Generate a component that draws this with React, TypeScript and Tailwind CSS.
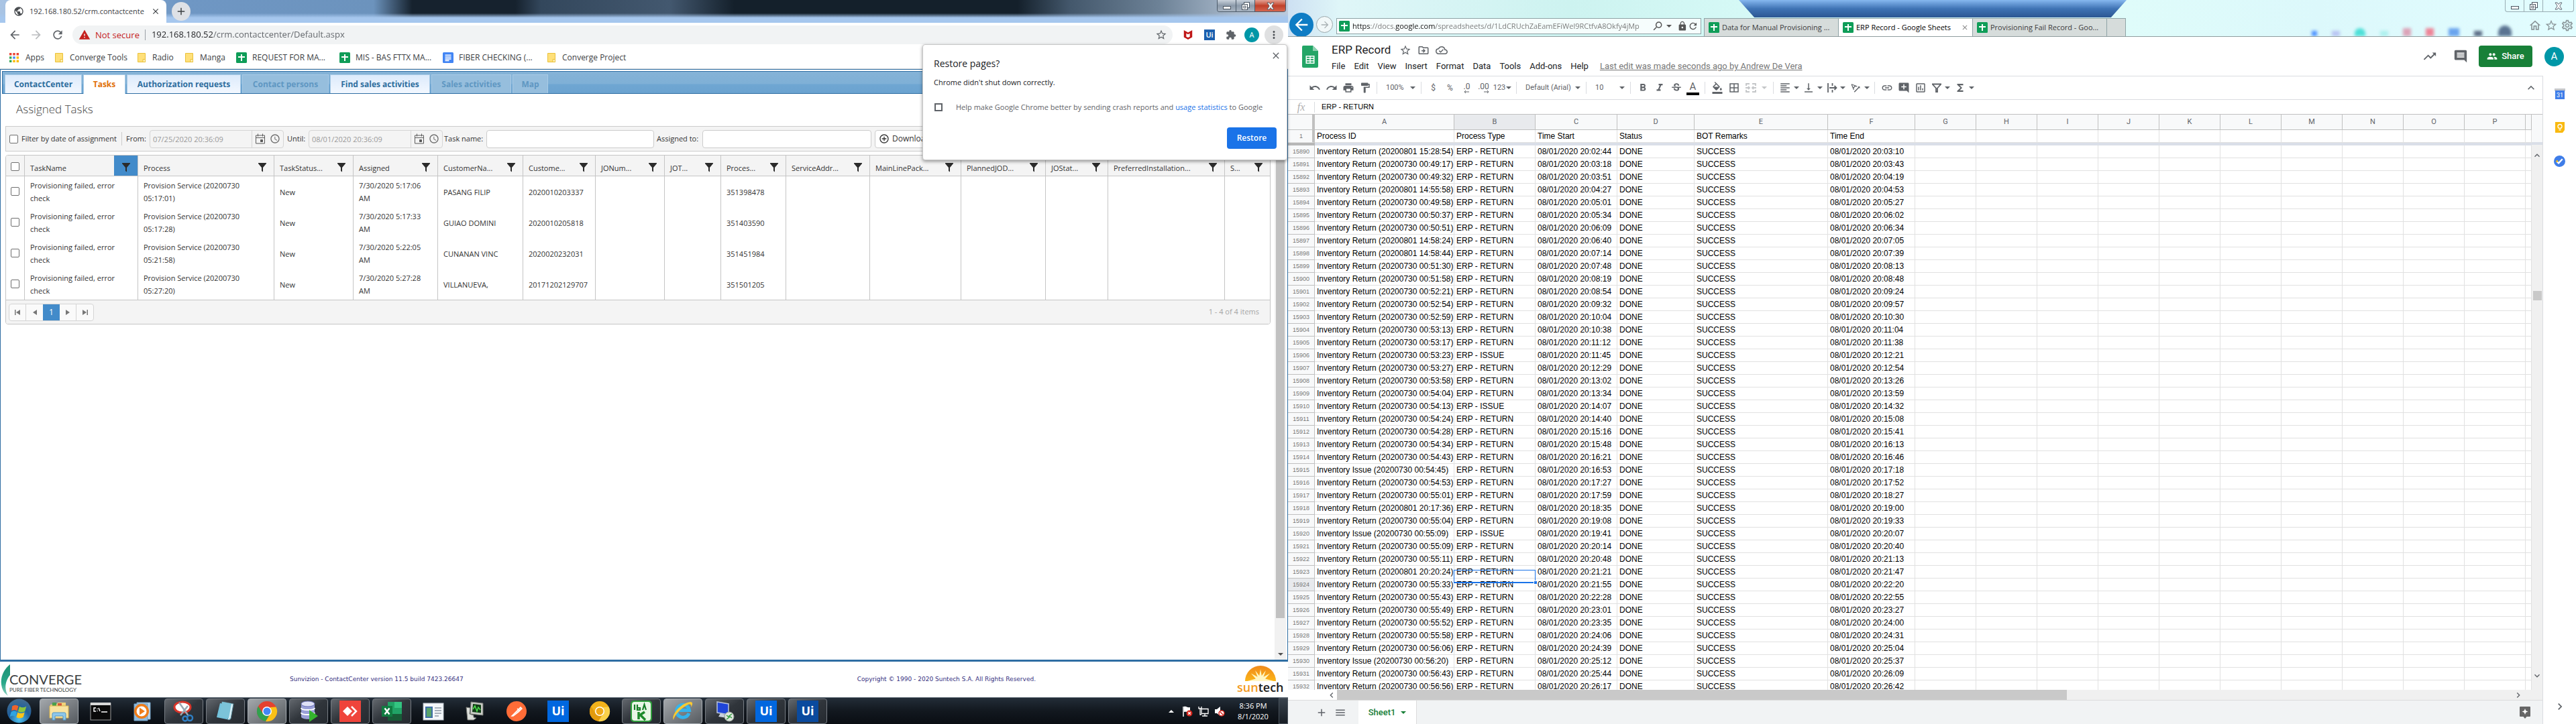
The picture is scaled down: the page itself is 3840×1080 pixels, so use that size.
import React from "react";
import {
  MdUndo, MdRedo, MdPrint, MdFormatPaint, MdStrikethroughS, MdFormatBold, MdFormatItalic,
  MdFormatColorFill, MdBorderAll, MdFormatAlignLeft, MdVerticalAlignBottom, MdTextRotationAngleup,
  MdInsertLink, MdAddComment, MdFunctions, MdTrendingUp, MdComment, MdStarBorder,
  MdArrowBack, MdArrowForward, MdRefresh, MdExtension, MdMoreVert, MdClose, MdAdd, MdPublic,
  MdLock, MdSearch, MdOutlineCloudDone, MdOutlineDriveFileMove, MdMenu, MdChevronRight,
  MdKeyboardArrowUp, MdKeyboardArrowDown, MdWarning, MdGroup, MdOutlineInsertChart, MdOutlineHome,
  MdOutlineSettings, MdOutlineWatchLater, MdAddCircleOutline,
} from "react-icons/md";

const UI = "font-['Open_Sans','Liberation_Sans',sans-serif]";
const ARIAL = "font-['Liberation_Sans',sans-serif]";
const ROBOTO = "font-['Roboto','Liberation_Sans',sans-serif]";

/* ---------- shared icons ---------- */

const SheetsFavicon = () => (
  <svg viewBox="0 0 16 16" className="h-4 w-4 shrink-0" aria-hidden="true">
    <rect width="16" height="16" rx="1.5" fill="#0f9d58" />
    <path d="M7 3h2v3h4v2H9v5H7V8H3V6h4z" fill="#fff" />
  </svg>
);

const DocsFavicon = () => (
  <svg viewBox="0 0 16 16" className="h-4 w-4 shrink-0" aria-hidden="true">
    <rect width="16" height="16" rx="1.5" fill="#4285f4" />
    <path d="M3.5 3.5h9v1.6h-9zM3.5 6.3h9v1.6h-9zM3.5 9.1h9v1.6h-9zM3.5 11.6h6v1.6h-6z" fill="#fff" />
  </svg>
);

const FolderIcon = () => (
  <svg viewBox="0 0 16 16" className="h-4 w-4 shrink-0" aria-hidden="true">
    <path d="M2.5 1.5h11v13h-11z" fill="#ffe07a" stroke="#e9c13a" />
    <path d="M10 10.5h3.5v4H10z" fill="#fff0b8" stroke="#e9c13a" />
  </svg>
);

const AppsIcon = () => (
  <svg viewBox="0 0 14 14" className="h-[14px] w-[14px] shrink-0" aria-hidden="true">
    <path d="M0 0h3.4v3.4H0zM5.3 0h3.4v3.4H5.3zM10.6 0H14v3.4h-3.4z" fill="#ea4335" />
    <path d="M0 5.3h3.4v3.4H0z" fill="#34a853" />
    <path d="M5.3 5.3h3.4v3.4H5.3z" fill="#4285f4" />
    <path d="M10.6 5.3H14v3.4h-3.4zM5.3 10.6h3.4V14H5.3zM10.6 10.6H14V14h-3.4z" fill="#fbbc05" />
    <path d="M0 10.6h3.4V14H0z" fill="#34a853" />
  </svg>
);

const Caret = ({ className = "" }: { className?: string }) => (
  <svg viewBox="0 0 8 4" className={`h-1 w-2 shrink-0 ${className}`} aria-hidden="true">
    <path d="M0 0h8L4 4z" fill="currentColor" />
  </svg>
);

const FunnelIcon = () => (
  <svg viewBox="0 0 12 14" className="h-[14px] w-3" aria-hidden="true">
    <path d="M0 0h12v1L7 7v6.5L5 12V7L0 1z" fill="#2b2b2b" />
  </svg>
);

function WindowButtons({ glass }: { glass?: boolean }) {
  const base = glass ? "border-[#9aaeb4] text-[#3f4d55]" : "border-[#4c5b6b] text-white";
  const fill = glass ? "" : "bg-linear-to-b from-[#c9d2dc] via-[#8c9aaa] to-[#a9b5c2]";
  const close = glass ? "" : "bg-linear-to-b from-[#e2a193] via-[#c0402a] to-[#d5654f]";
  return (
    <div className={`flex h-[18px] w-[103px] overflow-hidden rounded-b border border-t-0 ${base}`}>
      <button aria-label="Minimize" className={`flex w-7 items-center justify-center border-r border-inherit ${fill}`}>
        <svg viewBox="0 0 12 12" className="h-3 w-3"><rect x="0.5" y="6.5" width="11" height="4" fill="#fff" stroke="#4a5561" /></svg>
      </button>
      <button aria-label="Restore down" className={`flex w-7 items-center justify-center border-r border-inherit ${fill}`}>
        <svg viewBox="0 0 12 12" className="h-3 w-3" fill="#fff" stroke="#4a5561">
          <rect x="3.5" y="0.5" width="8" height="8" /><rect x="0.5" y="3.5" width="8" height="8" /><rect x="3" y="6" width="3" height="3" fill="none" />
        </svg>
      </button>
      <button aria-label="Close" className={`flex flex-1 items-center justify-center ${close}`}>
        <svg viewBox="0 0 12 12" className="h-3 w-3"><path d="M1 1h3l2 2.5L8 1h3L7.8 6 11 11H8L6 8.5 4 11H1l3.200-5z" fill="#fff" stroke="#4a5561" strokeWidth="0.9" /></svg>
      </button>
    </div>
  );
}

/* ---------- Chrome window ---------- */

function ChromeHeader() {
  return (
    <header>
      <div className="flex h-[34px] justify-between bg-[linear-gradient(to_bottom,transparent_58%,#a6c7ee_78%),linear-gradient(to_right,#a9c4e4_0%,#6f97c4_14%,#6c93bd_29%,#16222e_32%,#16222e_40%,#33475c_42%,#43586f_52%,#14202b_57%,#14202b_79%,#43576b_83%,#6d8297_90%,#a9b9cb_96%,#bccadb_100%)]">
        <div className="flex items-end">
          <div className="ml-2 flex h-[34px] w-[240px] items-center rounded-t-lg bg-white pl-3 pr-[9px]">
            <MdPublic className="h-4 w-4 shrink-0 text-[#4a4d51]" />
            <span className="ml-2 flex-1 whitespace-nowrap text-[11px] text-[#3c4043]">192.168.180.52/crm.contactcente</span>
            <button aria-label="Close tab" className="ml-1"><MdClose className="h-[14px] w-[14px] text-[#3c4043]" /></button>
          </div>
          <button aria-label="New tab" className="mb-[3px] ml-2 flex h-7 w-7 items-center justify-center rounded-full bg-[#dee1e6]">
            <MdAdd className="h-[18px] w-[18px] text-[#3c4043]" />
          </button>
        </div>
        <div className="mr-[3px]"><WindowButtons /></div>
      </div>
      <div className="flex h-9 items-center bg-white pl-3 pr-[7px]">
        <button aria-label="Back"><MdArrowBack className="h-5 w-5 text-[#5f6368]" /></button>
        <button aria-label="Forward" className="ml-3"><MdArrowForward className="h-5 w-5 text-[#babcbe]" /></button>
        <button aria-label="Reload" className="ml-3"><MdRefresh className="h-5 w-5 text-[#5f6368]" /></button>
        <div className="ml-3 flex h-7 flex-1 items-center rounded-full bg-[#f1f3f4] pl-[9px] pr-2">
          <MdWarning className="h-[18px] w-[18px] text-[#c5221f]" />
          <span className="ml-[7px] border-r border-[#9aa0a6] pr-2 text-[13px] leading-4 text-[#c5221f]">Not secure</span>
          <input aria-label="Address" defaultValue="192.168.180.52/crm.contactcenter/Default.aspx" className="ml-[9px] flex-1 bg-[linear-gradient(to_right,#202124_92px,#5f6368_92px)] bg-clip-text text-[13px] text-transparent outline-none" />
          <button aria-label="Bookmark this page"><MdStarBorder className="h-[18px] w-[18px] text-[#5f6368]" /></button>
        </div>
        <div className="flex items-center gap-4 pl-[15px]">
          <button aria-label="McAfee WebAdvisor">
            <svg viewBox="0 0 16 18" className="h-4 w-4"><path d="M1 1l7 4 7-4v12l-7 4-7-4z" fill="#c01818" /><path d="M5 6.500l3 1.700 3-1.700v5.500l-3 1.500-3-1.500z" fill="#fff" /></svg>
          </button>
          <button aria-label="UiPath" className="h-4 w-4 bg-[#1b5fae] text-[11px] leading-4 font-semibold text-white">Ui</button>
          <button aria-label="Extensions"><MdExtension className="h-4 w-4 text-[#5f6368]" /></button>
        </div>
        <button aria-label="Profile" className="ml-3 h-[22px] w-[22px] rounded-full bg-[#0097a7] text-[11px] text-white">A</button>
        <button aria-label="Menu" className="ml-2 flex h-7 w-7 items-center justify-center rounded-full bg-[#dfe0e1]"><MdMoreVert className="h-[18px] w-[18px] text-[#4d5156]" /></button>
      </div>
      <nav className="flex h-[33px] items-center border-b border-[#dadce0] bg-white pl-[14px] text-[12px] text-[#3c4043]" aria-label="Bookmarks">
        <a href="#apps" className="flex w-[66px] items-center gap-2.5"><AppsIcon />Apps</a>
        <a href="#tools" className="flex w-[123px] items-center gap-2"><FolderIcon />Converge Tools</a>
        <a href="#radio" className="flex w-[71px] items-center gap-2"><FolderIcon />Radio</a>
        <a href="#manga" className="flex w-[78px] items-center gap-2"><FolderIcon />Manga</a>
        <a href="#request" className="flex w-[154px] items-center gap-2"><SheetsFavicon />REQUEST FOR MA...</a>
        <a href="#mis" className="flex w-[154px] items-center gap-2"><SheetsFavicon />MIS - BAS FTTX MA...</a>
        <a href="#fiber" className="flex w-[154px] items-center gap-2"><DocsFavicon />FIBER CHECKING (...</a>
        <a href="#project" className="flex items-center gap-2"><FolderIcon />Converge Project</a>
      </nav>
    </header>
  );
}

const crmTabs = [
  { label: "ContactCenter", width: "w-[115px]", state: "on" },
  { label: "Tasks", width: "w-[63px]", state: "active" },
  { label: "Authorization requests", width: "w-[170px]", state: "on" },
  { label: "Contact persons", width: "w-[129px]", state: "off" },
  { label: "Find sales activities", width: "w-[149px]", state: "on" },
  { label: "Sales activities", width: "w-[119px]", state: "off" },
  { label: "Map", width: "w-[53px]", state: "off" },
];

const tabStyles: Record<string, string> = {
  on: "bg-linear-to-b from-[#dceafb] to-[#f3f8ff] text-[#2e6e9e] h-7",
  active: "bg-white text-[#e17009] h-[29px] -mb-px",
  off: "bg-[#96bedd] text-[#5f97c2] h-7",
};

const columns: { label: string; width: string; active?: boolean }[] = [
  { label: "TaskName", width: "w-[169px]", active: true },
  { label: "Process", width: "w-[203px]" },
  { label: "TaskStatus...", width: "w-[118px]" },
  { label: "Assigned", width: "w-[126px]" },
  { label: "CustomerNa...", width: "w-[127px]" },
  { label: "Custome...", width: "w-[108px]" },
  { label: "JONum...", width: "w-[103px]" },
  { label: "JOT...", width: "w-[84px]" },
  { label: "Proces...", width: "w-[97px]" },
  { label: "ServiceAddr...", width: "w-[125px]" },
  { label: "MainLinePack...", width: "w-[136px]" },
  { label: "PlannedJOD...", width: "w-[126px]" },
  { label: "JOStat...", width: "w-[93px]" },
  { label: "PreferredInstallation...", width: "w-[174px]" },
  { label: "S...", width: "" },
];

const tasks = [
  ["05:17:01", "5:17:06", "PASANG FILIP", "2020010203337", "351398478"],
  ["05:17:28", "5:17:33", "GUIAO DOMINI", "2020010205818", "351403590"],
  ["05:21:58", "5:22:05", "CUNANAN VINC", "2020020232031", "351451984"],
  ["05:27:20", "5:27:28", "VILLANUEVA,", "20171202129707", "351501205"],
];

function DatePicker({ label, value }: { label: string; value: string }) {
  return (
    <div className="flex h-[27px] w-[200px] items-center rounded border border-[#d5d5d5] bg-[#f4f4f4]">
      <input aria-label={label} defaultValue={value} disabled className="h-full w-[152px] border-r border-[#d5d5d5] pl-1 text-[11px] text-[#9a9a9a]" />
      <button aria-label="Pick date" className="ml-1 flex w-4 justify-center">
        <svg viewBox="0 0 14 16" className="h-4 w-[14px]" fill="none" stroke="#5b5b5b">
          <path d="M0.500 3h13v12H0.500zM0.500 6.500h13M3.500 0.500v4M10.500 0.500v4" /><path d="M7.500 9.500h3v3h-3z" fill="#5b5b5b" />
        </svg>
      </button>
      <button aria-label="Pick time" className="ml-1.5 flex w-4 justify-center"><MdOutlineWatchLater className="h-4 w-4 text-[#6b6b6b]" /></button>
    </div>
  );
}

const checkbox = "h-[13px] w-[13px] shrink-0 appearance-none rounded-[2px] border border-[#6f6f6f] bg-white";

function TasksPage() {
  return (
    <main className="flex min-h-0 flex-1 flex-col border border-b-[3px] border-[#2f6ea3] bg-white pt-[2px] pl-[2px] text-[#333]">
      <nav className="flex h-[34px] items-end gap-[2px] border border-r-0 border-[#2f6ea3] bg-[linear-gradient(to_bottom,#85b3d7_0%,#7fb0d6_55%,#6fa6d2_60%,#6ba3d0_100%)] pl-[3px]" aria-label="Sections">
        {crmTabs.map((t) => (
          <button key={t.label} disabled={t.state === "off"} className={`border border-b-0 border-[#a9cbe6] text-[12px] font-bold whitespace-nowrap ${t.width} ${tabStyles[t.state]}`}>{t.label}</button>
        ))}
      </nav>
      <div className="flex min-h-0 flex-1">
        <div className="flex flex-1 flex-col pr-[6px] pl-[5px]">
          <h1 className="h-[48px] pl-4 text-[17px] leading-[46px] font-light text-[#444]">Assigned Tasks</h1>
          <form className="flex h-[38px] items-center overflow-hidden border border-[#ccc] bg-[#f4f4f4] pl-[5px] text-[11px] whitespace-nowrap">
            <label className="flex w-[167px] items-center gap-[5px]"><input type="checkbox" className={checkbox} />Filter by date of assignment</label>
            <span className="h-5 w-px shrink-0 bg-[#ccc]" />
            <span className="w-[41px] pl-[6px]">From:</span>
            <DatePicker label="From" value="07/25/2020 20:36:09" />
            <span className="w-[37px] pl-[5px]">Until:</span>
            <DatePicker label="Until" value="08/01/2020 20:36:09" />
            <label htmlFor="task-name" className="w-[65px] pl-[2px]">Task name:</label>
            <input id="task-name" className="h-[27px] w-[250px] rounded border border-[#ccc] bg-white" />
            <label htmlFor="assigned-to" className="w-[72px] pl-1">Assigned to:</label>
            <input id="assigned-to" className="h-[27px] w-[252px] rounded border border-[#ccc] bg-white" />
            <button type="button" className="ml-[5px] flex h-[27px] w-[120px] items-center gap-1 rounded border border-[#ccc] bg-white pl-[5px] text-[12px]"><MdAddCircleOutline className="h-4 w-4" />Download</button>
          </form>
          <section className="mt-[5px] overflow-hidden rounded border border-[#c5c5c5] text-[11px]">
            <table className="w-full table-fixed border-separate border-spacing-0">
              <thead className="bg-[#f4f4f4]">
                <tr>
                  <th className="h-[31px] w-[28px] border-r border-b border-[#c5c5c5] p-0"><input type="checkbox" aria-label="Select all" className={`${checkbox} mt-2`} /></th>
                  {columns.map((c) => (
                    <th key={c.label} className={`h-[31px] border-b border-[#c5c5c5] p-0 text-left font-normal not-last:border-r ${c.width}`}>
                      <span className="flex h-[30px] items-center justify-between overflow-hidden pl-2 whitespace-nowrap">
                        <span className="pt-2">{c.label}</span>
                        <button aria-label={`Filter ${c.label}`} className={`flex h-full w-[35px] shrink-0 items-center justify-center pt-1.5 ${c.active ? "bg-[#428bca]" : ""}`}><FunnelIcon /></button>
                      </span>
                    </th>
                  ))}
                </tr>
              </thead>
              <tbody className="leading-[19px]">
                {tasks.map(([time, at, customer, code, proc]) => (
                  <tr key={proc} className="*:h-[46px] *:border-r *:border-[#c5c5c5] *:px-2 *:last:border-r-0">
                    <td className="!px-0 text-center"><input type="checkbox" aria-label={`Select ${customer}`} className={`${checkbox} mt-1`} /></td>
                    <td className="pr-6!">Provisioning failed, error check</td>
                    <td>Provision Service (20200730<br />{time})</td>
                    <td>New</td>
                    <td>7/30/2020 {at}<br />AM</td>
                    <td>{customer}</td>
                    <td>{code}</td>
                    <td /><td />
                    <td>{proc}</td>
                    <td /><td /><td /><td /><td /><td />
                  </tr>
                ))}
              </tbody>
            </table>
            <footer className="flex h-9 items-center justify-between border-t border-[#c5c5c5] bg-[#f4f4f4] pr-4 pl-1">
              <div className="flex h-[26px] overflow-hidden rounded border border-[#d5d5d5] bg-[#fafafa] text-[#777] *:flex *:w-[25px] *:items-center *:justify-center">
                <button aria-label="First page" className="border-r border-[#d5d5d5]"><svg viewBox="0 0 8 8" className="h-2 w-2" fill="currentColor"><path d="M0 0h1.500v8H0zM8 0v8L2 4z" /></svg></button>
                <button aria-label="Previous page"><svg viewBox="0 0 8 8" className="h-2 w-2" fill="currentColor"><path d="M7 0v8L1 4z" /></svg></button>
                <button className="bg-[#428bca] text-[12px] text-white">1</button>
                <button aria-label="Next page" className="border-r border-[#d5d5d5]"><svg viewBox="0 0 8 8" className="h-2 w-2" fill="currentColor"><path d="M1 0v8l6-4z" /></svg></button>
                <button aria-label="Last page"><svg viewBox="0 0 8 8" className="h-2 w-2" fill="currentColor"><path d="M6.500 0H8v8H6.500zM0 0v8l6-4z" /></svg></button>
              </div>
              <span className="text-[11px] text-[#a5a5a5]">1 - 4 of 4 items</span>
            </footer>
          </section>
        </div>
        <div className="flex w-[17px] flex-col items-center bg-[#f1f1f1]" aria-hidden="true">
          <div className="mt-[17px] mb-[45px] w-[13px] flex-1 bg-[#c1c1c1]" />
          <div className="flex h-[17px] items-center text-[#505050]"><Caret /></div>
        </div>
        <div className="w-[2px]" />
      </div>
    </main>
  );
}

function RestoreDialog() {
  return (
    <div role="dialog" aria-label="Restore pages?" className="absolute top-[66px] right-px flex h-[173px] w-[544px] flex-col rounded-sm border border-[#c8c8c8] bg-white pr-4 pl-4 text-[#202124] shadow-[0_2px_5px_rgba(0,0,0,0.4)]">
      <div className="mt-2 -mr-2 flex h-4 justify-end"><button aria-label="Close"><MdClose className="h-4 w-4 text-[#5f6368]" /></button></div>
      <h2 className="-mt-1.5 text-[14px] leading-5">Restore pages?</h2>
      <p className="mt-[10px] text-[11px] leading-4">Chrome didn't shut down correctly.</p>
      <label className="mt-[21px] flex items-center text-[11px] leading-4 whitespace-nowrap text-[#5f6368]">
        <input type="checkbox" className="mr-5 ml-px h-3 w-3 appearance-none border-2 border-[#5f6368]" />
        Help make Google Chrome better by sending crash reports and&nbsp;<a href="#stats" className="text-[#1a73e8]">usage statistics</a>&nbsp;to Google
      </label>
      <button className="mt-[22px] -mr-px h-8 w-[74px] self-end rounded bg-[#1a73e8] text-[12px] font-semibold text-white">Restore</button>
    </div>
  );
}

function PageFooter() {
  return (
    <footer className="flex h-[53px] shrink-0 items-center justify-between bg-white text-[9px] text-[#352f80]">
      <div className="flex w-[135px] items-center">
        <svg viewBox="0 0 16 48" className="h-12 w-4 shrink-0">
          <defs><linearGradient id="leaf" x1="0" y1="0" x2="0" y2="1"><stop offset="0" stopColor="#1c8f73" /><stop offset="0.6" stopColor="#2aa88a" /><stop offset="1" stopColor="#8fd0c0" /></linearGradient></defs>
          <path d="M15 1C5 9-1 22 3 36c2 6 5 9 9 12C5 36 9 24 15 17z" fill="url(#leaf)" />
        </svg>
        <div className="-ml-0.5 pt-2 leading-none text-[#3c3f42] font-['Lato','Liberation_Sans',sans-serif]">
          <div className="text-[20px] whitespace-nowrap">CONVERGE</div>
          <div className="pt-0.5 text-[8px] whitespace-nowrap">PURE FIBER TECHNOLOGY</div>
        </div>
      </div>
      <div className="flex flex-1 justify-between pr-[300px] pl-[297px] font-['DejaVu_Sans','Liberation_Sans',sans-serif]">
        <span>Sunvizion - ContactCenter version 11.5 build 7423.26647</span>
        <span>Copyright © 1990 - 2020 Suntech S.A. All Rights Reserved.</span>
      </div>
      <div className="w-[76px] leading-none">
        <svg viewBox="0 0 52 26" className="ml-[10px] h-[23px] w-[50px]">
          <defs><linearGradient id="sun" x1="0" y1="0" x2="0" y2="1"><stop offset="0" stopColor="#f08a1c" /><stop offset="1" stopColor="#fbb519" /></linearGradient></defs>
          <path d="M0 26a26 26 0 0 1 52 0z" fill="url(#sun)" />
          <path d="M26 6l2 11 7-9-4 11 11-6-8 9 14 4H4l14-4-8-9 11 6-4-11 7 9z" fill="#fff6c4" />
        </svg>
        <div className="text-[18px] font-semibold text-[#1c1c1c]"><span className="text-[#f39a1e]">sun</span>tech</div>
      </div>
    </footer>
  );
}

/* ---------- Windows taskbar ---------- */

const Svg = ({ children, box = "0 0 32 32" }: { children: React.ReactNode; box?: string }) => (
  <svg viewBox={box} className="h-8 w-8" aria-hidden="true">{children}</svg>
);

const ChromeGlyph = ({ a, b, c, core }: { a: string; b: string; c: string; core: string }) => (
  <Svg>
    <circle cx="16" cy="16" r="15" fill={a} />
    <path d="M3 8.500A15 15 0 0 0 14 31l7-12-5 3.500-6-3z" fill={b} />
    <path d="M29.500 9.500A15 15 0 0 1 14 31l7.500-12L21 10z" fill={c} />
    <circle cx="16" cy="16" r="7" fill="#fff" /><circle cx="16" cy="16" r="5.500" fill={core} />
  </Svg>
);

const UiGlyph = ({ color }: { color: string }) => (
  <span className={`flex h-8 w-8 items-center justify-center text-[18px] font-bold text-white ${color}`}>Ui</span>
);

const taskIcons: { name: string; open?: boolean; bright?: boolean; icon: React.ReactNode }[] = [
  { name: "File Explorer", open: true, bright: true, icon: <Svg><path d="M3 6h9l2-3h12v22H3z" fill="#f0d27a" /><path d="M6 3h6v5H6z" fill="#4aa04a" /><path d="M14 4h6v4h-6z" fill="#d5573b" /><path d="M2 8h28v18H2z" fill="#f8e3a0" stroke="#d9b44d" /><path d="M6 29v-9q0-2 2-2h16q2 0 2 2v9h-4v-6H10v6z" fill="#8ec7ea" stroke="#4f97c6" /></Svg> },
  { name: "Command Prompt", icon: <Svg><rect x="1" y="4" width="30" height="25" fill="#0a0a0a" stroke="#9a9a9a" /><rect x="1" y="3" width="30" height="4" fill="#d8d8d8" /><path d="M9 11H6v5h3M11 12v1M11 15v1M13 11l2 5M17 17h9" stroke="#fff" fill="none" strokeWidth="1.400" /></Svg> },
  { name: "Media Player", icon: <Svg><path d="M8 3h20v25H8z" fill="#bcd7ec" stroke="#6f9cc0" /><path d="M4 5h20v25H4z" fill="#8dbbe0" stroke="#6f9cc0" /><circle cx="15" cy="16" r="11" fill="#ef7d1a" /><circle cx="15" cy="16" r="7.500" fill="#fff" /><path d="M12 10.500l8 5.500-8 5.500z" fill="#ef7d1a" /></Svg> },
  { name: "Snipping Tool", open: true, icon: <Svg><ellipse cx="14" cy="10" rx="12" ry="8" fill="#fff" stroke="#d8352a" strokeWidth="3" /><path d="M9 3l14 20M22 8L11 22" stroke="#9aa7b2" strokeWidth="2.500" /><circle cx="25" cy="26" r="4" fill="none" stroke="#2f7fc4" strokeWidth="2.500" /><circle cx="18" cy="27" r="3.500" fill="none" stroke="#2f7fc4" strokeWidth="2.500" /></Svg> },
  { name: "Notepad", open: true, icon: <Svg><path d="M8 4l18 3-3 22L3 25z" fill="#72c2dc" /><path d="M11 2l17 3-4 22-4 2z" fill="#d9f0f7" stroke="#5c8d9c" /><path d="M11 2l14 2.500-4 22L6 24z" fill="#7cc4d9" /></Svg> },
  { name: "Chrome", open: true, bright: true, icon: <ChromeGlyph a="#e5412f" b="#30a14e" c="#fbc116" core="#4387f5" /> },
  { name: "SQL Developer", open: true, icon: <Svg><path d="M5 4v20c0 5 20 5 20 0V4z" fill="#9aa0d8" /><ellipse cx="15" cy="5" rx="10" ry="4" fill="#dfe1f6" stroke="#6b70b8" /><path d="M5 11c0 4 20 4 20 0M5 18c0 4 20 4 20 0" fill="none" stroke="#fff" strokeWidth="2" /><path d="M17 14l13 9-13 9z" fill="#35b52e" /></Svg> },
  { name: "AnyDesk", open: true, icon: <Svg><rect width="32" height="32" fill="#ef443b" /><path d="M12 9l7 7-7 7-7-7z" fill="#fff" /><path d="M18 9l7 7-7 7" fill="none" stroke="#fff" strokeWidth="2.500" /></Svg> },
  { name: "Excel", open: true, icon: <Svg><path d="M10 2h21v28H10z" fill="#21a366" /><path d="M20 2h11v9H20z" fill="#33c481" /><path d="M10 20h21v10H10z" fill="#185c37" /><path d="M1 8h16v16H1z" fill="#107c41" /><path d="M5.500 11.500l7 9M12.500 11.500l-7 9" stroke="#fff" strokeWidth="2.400" /></Svg> },
  { name: "Task Editor", icon: <Svg><rect x="1" y="4" width="30" height="25" fill="#f4f7fa" stroke="#b5bec8" /><rect x="4" y="9" width="11" height="17" fill="#3f6fa8" /><rect x="6" y="11" width="7" height="13" fill="#58a36a" /><path d="M18 11h10M18 15h10M18 19h10M18 23h6" stroke="#8d99a6" strokeWidth="1.500" /></Svg> },
  { name: "Terminal", icon: <Svg><path d="M10 2l18 2v18L9 20z" fill="#c9ccc6" stroke="#6e706c" /><path d="M13 5l12 1.500v12L12 17z" fill="#123c16" /><path d="M13 13l3-5 3 8 2-6 3 4" stroke="#4ce04c" fill="none" strokeWidth="1.500" /><path d="M3 10l6 1-1 9 6 2v3l4 1-4 3H5z" fill="#dcdeda" stroke="#6e706c" /></Svg> },
  { name: "Postman", icon: <Svg><circle cx="16" cy="16" r="15" fill="#ff6c37" /><path d="M9 23l9-9 4-4 2 2-5 5-8 6zM17 12l4 4" fill="#ffd9c8" stroke="#fff" strokeWidth="1.400" /></Svg> },
  { name: "UiPath Robot", icon: <UiGlyph color="bg-[#0067df]" /> },
  { name: "Chrome Canary", icon: <ChromeGlyph a="#f3b21b" b="#e29a0d" c="#fbd04a" core="#f0a817" /> },
  { name: "iBAS", open: true, icon: <Svg><rect width="32" height="32" rx="5" fill="#2f9e3c" /><rect x="2" y="2" width="28" height="28" rx="4" fill="#e9f6e6" /><path d="M6 6v8M10 6v8h4v-3h-4M18 14l2.500-8L23 14" stroke="#167d26" strokeWidth="2.200" fill="none" /><path d="M12 28V17M12 23l9-6M14 21l8 8" stroke="#1f8a2c" strokeWidth="3.500" /></Svg> },
  { name: "Internet Explorer", open: true, bright: true, icon: <Svg><path d="M25 19a9.500 9.500 0 1 1 .5-4.500H10" fill="none" stroke="#35b3ec" strokeWidth="5" /><path d="M2 29C-2 22 12 4 27 2c5 0 3 5 1 8 1-4-1-6-6-3C12 12 3 23 2 29z" fill="#f9c931" /></Svg> },
  { name: "Remote Desktop", open: true, icon: <Svg><path d="M5 2l17 3v16L5 18z" fill="#1f45d8" stroke="#b9c3d8" strokeWidth="1.500" /><path d="M10 19l10 3v4l-13-2z" fill="#c9d0dc" /><circle cx="23" cy="24" r="7" fill="#dfe6df" stroke="#8f9a90" /><path d="M19 22l4 3-4 3M27 20l-4 3 4 3" stroke="#2f9e3c" strokeWidth="1.500" fill="none" /></Svg> },
  { name: "UiPath Studio", open: true, icon: <UiGlyph color="bg-[#0067df]" /> },
  { name: "UiPath Assistant", open: true, icon: <UiGlyph color="bg-[#0a4a9e]" /> },
];

function Taskbar() {
  return (
    <footer className="flex h-10 shrink-0 items-center justify-between border-t border-[#6d7882] bg-linear-to-b from-[#232d38] via-[#12181f] to-[#0a0e13]">
      <div className="flex h-full items-center">
        <button aria-label="Start" className="flex w-[57px] justify-center">
          <svg viewBox="0 0 36 36" className="h-[37px] w-[37px]">
            <defs><radialGradient id="orb" cx="0.5" cy="0.85" r="0.9"><stop offset="0" stopColor="#4fc3ee" /><stop offset="0.5" stopColor="#1f5f9c" /><stop offset="1" stopColor="#4a6f8e" /></radialGradient></defs>
            <circle cx="18" cy="18" r="17.500" fill="url(#orb)" />
            <path d="M8 11c3-2 6-2 9 0l-2 7c-3-2-5-2-8 0z" fill="#f0642c" /><path d="M18.500 11.500c3 2 6 2 10 0l-2 7c-4 2-7 2-10 0z" fill="#8cc63e" />
            <path d="M6.500 19.500c3-2 5-2 8 0l-2 7c-2-2-5-2-8 0z" fill="#2fa4e0" /><path d="M16 20c3 2 6 2 10 0l-2 7c-4 2-7 2-10 0z" fill="#fcc419" />
          </svg>
        </button>
        {taskIcons.map((t) => (
          <button key={t.name} aria-label={t.name} className={`mx-[2px] flex h-[38px] w-[58px] items-center justify-center rounded-sm border ${t.open ? (t.bright ? "border-[#aab0b6] bg-linear-to-br from-[#a4a8ac] to-[#565b60]" : "border-[#777d84] bg-linear-to-br from-[#63686e] via-[#30353b] to-[#252a30]") : "border-transparent"}`}>
            {t.icon}
          </button>
        ))}
      </div>
      <div className="flex h-full items-center text-white">
        <button aria-label="Show hidden icons" className="mr-3"><svg viewBox="0 0 8 4" className="h-1 w-2"><path d="M0 4h8L4 0z" fill="#fff" /></svg></button>
        <svg viewBox="0 0 16 16" className="mr-2 h-4 w-4"><path d="M2 1v15" stroke="#fff" strokeWidth="1.500" /><path d="M3 1c4-1 4 2 9 1v7c-5 1-5-1-9 0z" fill="#fff" /><circle cx="11" cy="11" r="4.500" fill="#d8261c" /><path d="M9.200 9.200l3.600 3.600M12.800 9.200l-3.600 3.600" stroke="#fff" strokeWidth="1.300" /></svg>
        <svg viewBox="0 0 16 16" className="mr-2 h-4 w-4" fill="none" stroke="#fff" strokeWidth="1.300"><path d="M5 4.500h10v7H5zM10 12v3M6 15h8M1 1v3h4V1M3 4v9h2" /></svg>
        <svg viewBox="0 0 16 16" className="h-4 w-4"><path d="M1 5h3l5-4v14l-5-4H1z" fill="#fff" /><circle cx="11" cy="11" r="4" fill="#fff" stroke="#d8261c" strokeWidth="1.500" /><path d="M8.500 8.500l5 5" stroke="#d8261c" strokeWidth="1.500" /></svg>
        <div className="w-[80px] pl-1 text-center text-[11px] leading-4"><div>8:36 PM</div><div>8/1/2020</div></div>
        <button aria-label="Show desktop" className="h-full w-[14px] border border-[#4b545d] bg-linear-to-b from-[#39434d] to-[#171d24]" />
      </div>
    </footer>
  );
}

/* ---------- Spreadsheet window ---------- */

function BrowserTab({ title, active }: { title: string; active?: boolean }) {
  return (
    <div className={`flex h-[27px] w-[200px] items-center gap-1 border-t border-r border-[#8fa3a6] pr-[5px] pl-[6px] text-[11px] whitespace-nowrap ${active ? "bg-white text-black" : "bg-[#d6dcdb] text-[#3b3b3b]"}`}>
      <SheetsFavicon /><span className="flex-1">{title}</span>
      {active && <button aria-label="Close tab"><MdClose className="h-3 w-3 text-[#8a8a8a]" /></button>}
    </div>
  );
}

function ExplorerHeader() {
  return (
    <header className="relative flex h-[55px] items-start justify-between overflow-hidden border-b border-[#8f9c9e] bg-[linear-gradient(to_right,#cde0f2_0%,#dff6f8_4%,#cdf3f0_22%,#d8fbf8_40%,#dffcfa_65%,#dcf8fb_80%,#e2fdff_100%)]">
      <div className="absolute top-0 left-[672px] h-[26px] w-[578px] bg-linear-to-b from-[#86b8ef] via-[#3f73b4] to-[#2c5793] [clip-path:polygon(0_0,100%_0,96%_100%,4%_100%)]" aria-hidden="true" />
      <div className="absolute right-[140px] bottom-0 flex h-3 items-end gap-[22px] blur-[2px]" aria-hidden="true">
        <span className="h-2 w-2 bg-[#4f92ff]" /><span className="h-2 w-3 bg-[#b9c4f2]" /><span className="h-3 w-4 rounded-t-full bg-[#4fe0d8]" /><span className="h-2 w-3 bg-[#aef0ee]" /><span className="h-3 w-3 bg-[#dba3b8]" /><span className="h-3 w-3 bg-[#ee8598]" /><span className="h-3 w-4 bg-[#6aa4ee]" /><span className="h-2 w-3 bg-[#5c6c85]" />
      </div>
      <div className="absolute right-[96px] bottom-0 h-4 w-5 rounded-t-full bg-[#5a7391] blur-[2px]" aria-hidden="true" />
      <div className="relative flex items-end pt-[19px] pl-[2px]">
        <button aria-label="Back" className="-mb-px flex h-9 w-9 items-center justify-center rounded-full bg-[#0f7cc4]"><MdArrowBack className="h-7 w-7 text-white" /></button>
        <button aria-label="Forward" className="mb-[5px] ml-1 flex h-[25px] w-[25px] items-center justify-center rounded-full border border-[#9aa7ab] bg-[#f2f8f9]"><MdArrowForward className="h-4 w-4 text-[#a8b0b3]" /></button>
        <div className="mb-[3px] ml-[5px] flex h-6 w-[544px] items-center border border-[#8fa3a6] bg-white/80 px-[3px] text-[#555]">
          <SheetsFavicon />
          <input aria-label="Address" defaultValue="https://docs.google.com/spreadsheets/d/1LdCRUchZaEamEFiWel9RCtfvA8Okfy4jMp" className="ml-1 w-[450px] bg-[linear-gradient(to_right,#111_26px,#777_26px,#777_64px,#111_64px,#111_123px,#777_123px)] bg-clip-text text-[11px] text-transparent outline-none" />
          <MdSearch className="ml-1 h-[18px] w-[18px] -scale-x-100" /><Caret className="ml-1" /><MdLock className="ml-2 h-4 w-4" /><MdRefresh className="ml-px h-4 w-4" />
        </div>
        <div className="ml-1 flex border-l border-[#8fa3a6]">
          <BrowserTab title="Data for Manual Provisioning ..." />
          <BrowserTab title="ERP Record - Google Sheets" active />
          <BrowserTab title="Provisioning Fail Record - Goo..." />
          <button aria-label="New tab" className="h-[27px] w-7 border-t border-r border-[#8fa3a6] bg-[#d6dcdb]" />
        </div>
      </div>
      <div className="relative flex flex-col items-end pr-[3px]">
        <WindowButtons glass />
        <div className="mt-[10px] flex gap-1 text-[#8b9699]">
          <button aria-label="Home"><MdOutlineHome className="h-5 w-5" /></button>
          <button aria-label="Favorites"><MdStarBorder className="h-5 w-5" /></button>
          <button aria-label="Tools"><MdOutlineSettings className="h-5 w-5" /></button>
        </div>
      </div>
    </header>
  );
}

const menus = ["File", "Edit", "View", "Insert", "Format", "Data", "Tools", "Add-ons", "Help"];

function DocHeader() {
  return (
    <header className="flex h-[58px] items-center justify-between pr-[18px]">
      <div className="flex pt-[6px]">
        <svg viewBox="0 0 24 33" className="mt-[5px] ml-[21px] h-[33px] w-6"><path d="M2 0h14l8 8v23q0 2-2 2H2q-2 0-2-2V2q0-2 2-2z" fill="#23a566" /><path d="M16 0l8 8h-8z" fill="#8ed1b1" /><path d="M5.500 15h13v12h-13z" fill="#fff" /><path d="M7 16.500h4.300v2H7zM12.700 16.500H17v2h-4.300zM7 20h4.300v2H7zM12.700 20H17v2h-4.300zM7 23.500h4.300v2H7zM12.700 23.500H17v2h-4.300z" fill="#23a566" /></svg>
        <div className="ml-5">
          <div className="flex h-6 items-center text-[#5f6368]">
            <h1 className="w-[101px] text-[17px] text-[#202124]">ERP Record</h1>
            <button aria-label="Star"><MdStarBorder className="h-[18px] w-[18px]" /></button>
            <button aria-label="Move" className="ml-[9px]"><MdOutlineDriveFileMove className="h-[18px] w-[18px]" /></button>
            <button aria-label="Document status" className="ml-[9px]"><MdOutlineCloudDone className="h-[18px] w-[18px]" /></button>
          </div>
          <nav className="flex h-6 items-center gap-[13px] text-[13px] text-[#202124]">
            {menus.map((m) => <button key={m}>{m}</button>)}
            <a href="#history" className="ml-1 text-[#777] underline">Last edit was made seconds ago by Andrew De Vera</a>
          </nav>
        </div>
      </div>
      <div className="flex items-center text-[#5f6368]">
        <button aria-label="Activity"><MdTrendingUp className="h-[22px] w-[22px]" /></button>
        <button aria-label="Comments" className="ml-6"><MdComment className="h-[22px] w-[22px]" /></button>
        <button className="ml-4 flex h-8 w-20 items-center justify-center gap-1.5 rounded bg-[#188038] text-[13px] font-medium text-white"><MdGroup className="h-4 w-4" />Share</button>
        <button aria-label="Account" className="ml-[18px] h-[29px] w-[29px] rounded-full bg-[#0097a7] text-[15px] text-white">A</button>
      </div>
    </header>
  );
}

const Sep = () => <span className="mx-[5px] h-[18px] w-px bg-[#dadce0]" />;

function Tool({ name, children }: { name: string; children: React.ReactNode }) {
  return <button aria-label={name} className="flex h-6 w-[25px] items-center justify-center">{children}</button>;
}

function ToolMenu({ name, children }: { name: string; children: React.ReactNode }) {
  return <button aria-label={name} className="flex h-6 w-[35px] items-center justify-center gap-1">{children}<Caret /></button>;
}

function ToolSelect({ name, value, width }: { name: string; value: string; width: string }) {
  return (
    <span className={`flex items-center ${width}`}>
      <select aria-label={name} className="min-w-0 flex-1 appearance-none pl-2 text-[11px] outline-none"><option>{value}</option></select>
      <Caret className="mr-[3px]" />
    </span>
  );
}

function Toolbar() {
  const i = "h-[18px] w-[18px]";
  return (
    <div role="toolbar" className="flex h-9 items-center border-t border-b border-[#dadce0] pl-[27px] text-[12px] text-[#5f6368]">
      <Tool name="Undo"><MdUndo className={i} /></Tool>
      <Tool name="Redo"><MdRedo className={i} /></Tool>
      <Tool name="Print"><MdPrint className={i} /></Tool>
      <Tool name="Paint format"><MdFormatPaint className={i} /></Tool>
      <Sep />
      <ToolSelect name="Zoom" value="100%" width="w-[55px]" />
      <Sep />
      <Tool name="Currency">$</Tool>
      <Tool name="Percent">%</Tool>
      <Tool name="Decrease decimals"><span className="leading-3">.0<svg viewBox="0 0 8 4" className="h-1 w-2"><path d="M8 2H2M3 0L1 2l2 2" stroke="currentColor" fill="none" /></svg></span></Tool>
      <Tool name="Increase decimals"><span className="flex flex-col items-end leading-3">.00<svg viewBox="0 0 8 4" className="h-1 w-2"><path d="M0 2h6M5 0l2 2-2 2" stroke="currentColor" fill="none" /></svg></span></Tool>
      <button className="flex w-[31px] items-center justify-center gap-px text-[11px]">123<Caret /></button>
      <Sep />
      <ToolSelect name="Font" value="Default (Arial)" width="w-[93px]" />
      <Sep />
      <ToolSelect name="Font size" value="10" width="w-[55px]" />
      <Sep />
      <Tool name="Bold"><MdFormatBold className={i} /></Tool>
      <Tool name="Italic"><MdFormatItalic className={i} /></Tool>
      <Tool name="Strikethrough"><MdStrikethroughS className={i} /></Tool>
      <Tool name="Text color"><span className="border-b-4 border-black px-[5px] text-[15px] leading-[17px]">A</span></Tool>
      <Sep />
      <Tool name="Fill color"><MdFormatColorFill className={i} /></Tool>
      <Tool name="Borders"><MdBorderAll className={i} /></Tool>
      <Tool name="Merge cells"><svg viewBox="0 0 16 16" className="h-4 w-4 text-[#c4c6c8]" fill="none" stroke="currentColor" strokeWidth="1.800"><path d="M1 5V2h5M10 2h5v3M1 11v3h5M10 14h5v-3M0 8h5M16 8h-5M4 6l2 2-2 2M12 6l-2 2 2 2" /></svg></Tool>
      <span className="flex w-4 justify-center text-[#c4c6c8]"><Caret /></span>
      <Sep />
      <ToolMenu name="Horizontal align"><MdFormatAlignLeft className={i} /></ToolMenu>
      <ToolMenu name="Vertical align"><MdVerticalAlignBottom className={i} /></ToolMenu>
      <ToolMenu name="Text wrapping"><svg viewBox="0 0 16 16" className="h-4 w-4" fill="none" stroke="currentColor" strokeWidth="1.800"><path d="M2 1v14M8.500 1v4M8.500 11v4M4 8h10M11.500 5l3 3-3 3" /></svg></ToolMenu>
      <ToolMenu name="Text rotation"><MdTextRotationAngleup className={i} /></ToolMenu>
      <Sep />
      <Tool name="Insert link"><MdInsertLink className={i} /></Tool>
      <Tool name="Insert comment"><MdAddComment className={i} /></Tool>
      <Tool name="Insert chart"><MdOutlineInsertChart className={i} /></Tool>
      <ToolMenu name="Filter"><svg viewBox="0 0 16 16" className="h-4 w-4" fill="none" stroke="currentColor" strokeWidth="1.800"><path d="M1 2.500h14M2 3l5 5.500V14h2V8.500L14 3" /></svg></ToolMenu>
      <ToolMenu name="Functions"><MdFunctions className={i} /></ToolMenu>
      <button aria-label="Hide the menus" className="mr-[7px] ml-auto"><MdKeyboardArrowUp className="h-5 w-5" /></button>
    </div>
  );
}

const R = "Return";
const I = "Issue";
/* [item kind, process id timestamp, process type, time start, time end] */
const records: [string, string, string, string, string][] = [
  [R, "20200801 15:28:54", "RETURN", "20:02:44", "20:03:10"],
  [R, "20200730 00:49:17", "RETURN", "20:03:18", "20:03:43"],
  [R, "20200730 00:49:32", "RETURN", "20:03:51", "20:04:19"],
  [R, "20200801 14:55:58", "RETURN", "20:04:27", "20:04:53"],
  [R, "20200730 00:49:58", "RETURN", "20:05:01", "20:05:27"],
  [R, "20200730 00:50:37", "RETURN", "20:05:34", "20:06:02"],
  [R, "20200730 00:50:51", "RETURN", "20:06:09", "20:06:34"],
  [R, "20200801 14:58:24", "RETURN", "20:06:40", "20:07:05"],
  [R, "20200801 14:58:44", "RETURN", "20:07:14", "20:07:39"],
  [R, "20200730 00:51:30", "RETURN", "20:07:48", "20:08:13"],
  [R, "20200730 00:51:58", "RETURN", "20:08:19", "20:08:48"],
  [R, "20200730 00:52:21", "RETURN", "20:08:54", "20:09:24"],
  [R, "20200730 00:52:54", "RETURN", "20:09:32", "20:09:57"],
  [R, "20200730 00:52:59", "RETURN", "20:10:04", "20:10:30"],
  [R, "20200730 00:53:13", "RETURN", "20:10:38", "20:11:04"],
  [R, "20200730 00:53:17", "RETURN", "20:11:12", "20:11:38"],
  [R, "20200730 00:53:23", "ISSUE", "20:11:45", "20:12:21"],
  [R, "20200730 00:53:27", "RETURN", "20:12:29", "20:12:54"],
  [R, "20200730 00:53:58", "RETURN", "20:13:02", "20:13:26"],
  [R, "20200730 00:54:04", "RETURN", "20:13:34", "20:13:59"],
  [R, "20200730 00:54:13", "ISSUE", "20:14:07", "20:14:32"],
  [R, "20200730 00:54:24", "RETURN", "20:14:40", "20:15:08"],
  [R, "20200730 00:54:28", "RETURN", "20:15:16", "20:15:41"],
  [R, "20200730 00:54:34", "RETURN", "20:15:48", "20:16:13"],
  [R, "20200730 00:54:43", "RETURN", "20:16:21", "20:16:46"],
  [I, "20200730 00:54:45", "RETURN", "20:16:53", "20:17:18"],
  [R, "20200730 00:54:53", "RETURN", "20:17:27", "20:17:52"],
  [R, "20200730 00:55:01", "RETURN", "20:17:59", "20:18:27"],
  [R, "20200801 20:17:36", "RETURN", "20:18:35", "20:19:00"],
  [R, "20200730 00:55:04", "RETURN", "20:19:08", "20:19:33"],
  [I, "20200730 00:55:09", "ISSUE", "20:19:41", "20:20:07"],
  [R, "20200730 00:55:09", "RETURN", "20:20:14", "20:20:40"],
  [R, "20200730 00:55:11", "RETURN", "20:20:48", "20:21:13"],
  [R, "20200801 20:20:24", "RETURN", "20:21:21", "20:21:47"],
  [R, "20200730 00:55:33", "RETURN", "20:21:55", "20:22:20"],
  [R, "20200730 00:55:43", "RETURN", "20:22:28", "20:22:55"],
  [R, "20200730 00:55:49", "RETURN", "20:23:01", "20:23:27"],
  [R, "20200730 00:55:52", "RETURN", "20:23:35", "20:24:00"],
  [R, "20200730 00:55:58", "RETURN", "20:24:06", "20:24:31"],
  [R, "20200730 00:56:06", "RETURN", "20:24:39", "20:25:04"],
  [I, "20200730 00:56:20", "RETURN", "20:25:12", "20:25:37"],
  [R, "20200730 00:56:43", "RETURN", "20:25:44", "20:26:09"],
  [R, "20200730 00:56:56", "RETURN", "20:26:17", "20:26:42"],
];

const letters: [string, string][] = [
  ["A", "w-[208px]"], ["B", "w-[121px]"], ["C", "w-[122px]"], ["D", "w-[115px]"], ["E", "w-[199px]"], ["F", "w-[130px]"],
  ["G", "w-[91px]"], ["H", "w-[91px]"], ["I", "w-[91px]"], ["J", "w-[91px]"], ["K", "w-[91px]"], ["L", "w-[91px]"],
  ["M", "w-[91px]"], ["N", "w-[91px]"], ["O", "w-[91px]"], ["P", "w-[91px]"], ["", ""],
];

const FIRST_ROW = 15890;
const SELECTED_ROW = 15924;
const blanks = Array.from({ length: 11 }, (_, k) => k);
const cellRow = "*:h-[19px] *:border-r *:border-b *:border-[#e1e1e1] *:p-0 *:pl-[3px] *:leading-[17px]";

function Grid() {
  return (
    <table className={`w-full table-fixed border-separate border-spacing-0 text-[12px] whitespace-nowrap text-black ${ARIAL}`}>
      <thead>
        <tr className={`*:h-[23px] *:border-r *:border-b *:border-[#c0c0c0] *:p-0 *:text-[11px] *:font-normal *:text-[#5f6368] ${ROBOTO}`}>
          <th className="w-10 border-r-4! bg-[#f8f9fa]" />
          {letters.map(([l, w]) => <th key={l} className={`${w} ${l === "B" ? "bg-[#e8eaed]" : "bg-[#f8f9fa]"}`}>{l}</th>)}
        </tr>
      </thead>
      <tbody>
        <tr className={cellRow}>
          <th className="border-r-4! border-r-[#c0c0c0]! bg-[#f8f9fa] text-[9px] font-normal text-[#777]">1</th>
          <td>Process ID</td><td>Process Type</td><td>Time Start</td><td>Status</td><td>BOT Remarks</td><td>Time End</td>
          {blanks.map((k) => <td key={k} />)}
        </tr>
        <tr className="*:h-1 *:p-0">
          <th className="bg-[#b7b7b7]" /><td colSpan={17} className="bg-[#dadfe8]" />
        </tr>
        {records.map(([kind, id, type, start, end], n) => {
          const row = FIRST_ROW + n;
          return (
            <tr key={row} className={cellRow}>
              <th className={`border-[#c0c0c0]! pl-0! text-center text-[9px] font-normal text-[#777] ${row === SELECTED_ROW ? "bg-[#e8eaed]" : "bg-[#f8f9fa]"}`}>{row}</th>
              <td>Inventory {kind} ({id})</td>
              <td className="relative">
                ERP - {type}
                {row === SELECTED_ROW - 1 && (
                  <span className="absolute top-[6px] -left-px z-10 h-5 w-[122px] border border-b-2 border-[#1a73e8]">
                    <span className="absolute -right-1 -bottom-1 h-[6px] w-[6px] border border-white bg-[#1a73e8]" />
                  </span>
                )}
              </td>
              <td>08/01/2020 {start}</td>
              <td>DONE</td>
              <td>SUCCESS</td>
              <td>08/01/2020 {end}</td>
              {blanks.map((k) => <td key={k} />)}
            </tr>
          );
        })}
      </tbody>
    </table>
  );
}

function SidePanel() {
  return (
    <aside className="flex flex-1 flex-col items-center pt-[19px]">
      <button aria-label="Calendar"><svg viewBox="0 0 16 16" className="h-4 w-4"><path d="M0 0h16v4H0z" fill="#c4c7cc" /><path d="M1 3h14v13H1z" fill="#3f7de8" /><text x="8" y="12.500" fontSize="9" textAnchor="middle" fill="#fff">31</text></svg></button>
      <button aria-label="Keep" className="mt-[34px]"><svg viewBox="0 0 16 16" className="h-4 w-4"><path d="M1 0h14v12l-3 4H1z" fill="#f9b90f" /><circle cx="8" cy="6.500" r="3" fill="none" stroke="#fff" strokeWidth="1.300" /><path d="M6.500 11h3v1.500h-3z" fill="#fff" /></svg></button>
      <button aria-label="Tasks" className="mt-[34px]"><svg viewBox="0 0 18 18" className="h-[17px] w-[17px]"><circle cx="9" cy="9" r="9" fill="#3f7de8" /><path d="M4.500 9.500L7.500 12 13.500 5.500" stroke="#fff" strokeWidth="2.400" fill="none" /><circle cx="5" cy="9" r="1.500" fill="#fbbc04" /></svg></button>
      <button aria-label="Show side panel" className="mt-auto mb-4"><MdChevronRight className="h-5 w-5 text-[#5f6368]" /></button>
    </aside>
  );
}

function SheetWindow() {
  return (
    <section className={`flex min-w-0 flex-1 flex-col bg-white ${ROBOTO}`}>
      <div className={UI}><ExplorerHeader /></div>
      <DocHeader />
      <div className="flex min-h-0 flex-1">
        <div className="flex min-w-0 flex-1 flex-col border-r border-[#dadce0]">
          <Toolbar />
          <label className="flex h-[21px] items-center text-[12px] text-black">
            <span className="w-10 border-r border-[#dadce0] text-center text-[16px] leading-4 text-[#b0b0b0] italic font-['Liberation_Serif',serif]">fx</span>
            <input aria-label="Formula" defaultValue="ERP - RETURN" className={`ml-[10px] flex-1 text-[11px] outline-none ${ARIAL}`} />
          </label>
          <div className="flex min-h-0 flex-1 border-t border-[#c0c0c0]">
            <div className="min-w-0 flex-1 overflow-hidden"><Grid /></div>
            <div className="flex w-4 flex-col items-center bg-[#f0f0f0] text-[#5f6368]" aria-hidden="true">
              <div className="h-[45px] w-full border-b-4 border-[#dadfe8] bg-[#f8f9fa]" />
              <MdKeyboardArrowUp className="mt-2 h-4 w-4" />
              <div className="mt-[194px] h-[14px] w-[13px] bg-[#c9c9c9]" />
              <MdKeyboardArrowDown className="mt-auto mb-[13px] h-4 w-4" />
            </div>
          </div>
          <div className="flex h-[15px] shrink-0 items-center bg-[#f0f0f0] text-[#5f6368]" aria-hidden="true">
            <div className="flex h-full w-[73px] justify-end bg-white"><MdChevronRight className="h-4 w-4 rotate-180" /></div>
            <div className="h-full w-[1088px] bg-[#c9c9c9]" />
            <MdChevronRight className="mr-7 ml-auto h-4 w-4" />
          </div>
          <footer className="flex h-9 shrink-0 items-center border-t border-[#dcdcdc] bg-[#f1f3f4] text-[#5f6368]">
            <button aria-label="Add sheet" className="ml-[41px]"><MdAdd className="h-[18px] w-[18px]" /></button>
            <button aria-label="All sheets" className="ml-[10px]"><MdMenu className="h-[18px] w-[18px]" /></button>
            <button className="ml-[18px] flex h-full w-[87px] items-center justify-center gap-2 border-r border-[#dcdcdc] bg-white text-[13px] font-medium text-[#188038]">Sheet1<Caret /></button>
            <button aria-label="Explore" className="mr-[18px] ml-auto"><svg viewBox="0 0 16 18" className="h-[18px] w-4"><path d="M1 0h14q1 0 1 1v13q0 1-1 1h-4.500L8 18l-2.500-3H1q-1 0-1-1V1q0-1 1-1z" fill="#666" /><path d="M8 3l1.300 3.200L12.500 7.500 9.300 8.800 8 12 6.700 8.800 3.500 7.500l3.200-1.300z" fill="#fff" /></svg></button>
          </footer>
        </div>
        <div className="flex w-[49px] shrink-0"><SidePanel /></div>
      </div>
    </section>
  );
}

export default function App() {
  return (
    <div className="flex h-screen overflow-hidden bg-white">
      <section className={`relative flex min-w-0 flex-1 flex-col ${UI}`}>
        <ChromeHeader />
        <TasksPage />
        <PageFooter />
        <Taskbar />
        <RestoreDialog />
      </section>
      <SheetWindow />
    </div>
  );
}
